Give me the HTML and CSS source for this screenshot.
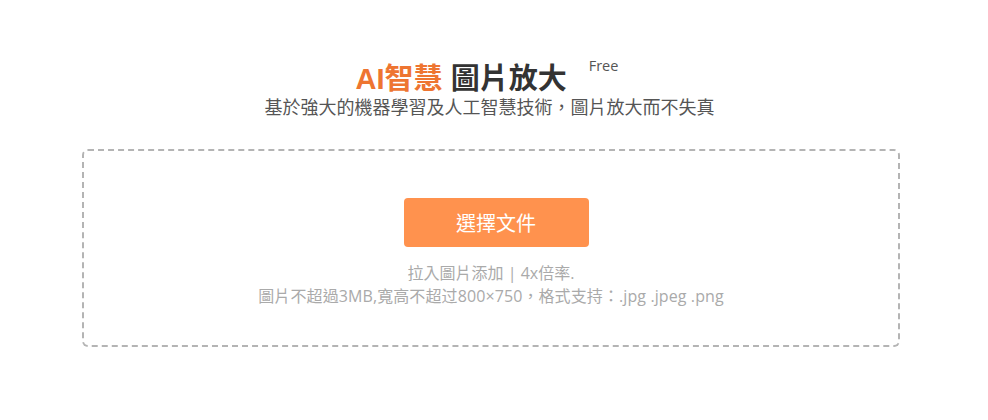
FILE: index.html
```html
<!DOCTYPE html>
<html lang="zh-Hant">
<head>
<meta charset="utf-8">
<title>AI智慧 圖片放大</title>
<link rel="stylesheet" href="styles.css">
</head>
<body>
<main class="page">
  <h1 class="title"><span class="accent">AI智慧</span> 圖片放大<span class="free">Free</span></h1>
  <p class="subtitle">基於強大的機器學習及人工智慧技術，圖片放大而不失真</p>
  <section class="dropzone">
    <button class="choose" type="button">選擇文件</button>
    <p class="hint">拉入圖片添加 | 4x倍率.</p>
    <p class="hint">圖片不超過3MB,寬高不超过800×750，格式支持：.jpg .jpeg .png</p>
  </section>
</main>
</body>
</html>
```
FILE: styles.css
```css
* { box-sizing: border-box; }
html, body { margin: 0; padding: 0; background: #fff; }
body {
  font-family: "Noto Sans CJK TC", "Noto Sans", sans-serif;
  color: #333;
}
.page {
  width: 988px;
  padding-top: 62px;
  display: flex;
  flex-direction: column;
  align-items: flex-start;
}
.title {
  align-self: stretch;
  margin: 0;
  padding-right: 14px;
  text-align: center;
  font-family: "Liberation Sans", "Noto Sans CJK TC", sans-serif;
  font-size: 29px;
  line-height: 34px;
  font-weight: 700;
  color: #333;
}
.accent { color: #ee7531; }
.free {
  font-family: "Open Sans", sans-serif;
  font-size: 14.5px;
  font-weight: 400;
  color: #555;
  margin-left: 22px;
  vertical-align: 18px;
  line-height: 0;
}
.subtitle {
  align-self: stretch;
  margin: 0;
  text-align: center;
  font-family: "Liberation Sans", "Noto Sans CJK TC", sans-serif;
  font-size: 18px;
  line-height: 24px;
  color: #555;
  padding-right: 9px;
}
.dropzone {
  margin: 29px 0 0 82px;
  width: 818px;
  height: 198px;
  border: 2px dashed #b4b4b4;
  border-radius: 6px;
  display: flex;
  flex-direction: column;
  align-items: center;
  padding-top: 47px;
}
.choose {
  width: 185px;
  height: 49px;
  margin: 0 0 0 10px;
  border: none;
  border-radius: 4px;
  background: #ff924e;
  color: #fff;
  font-family: inherit;
  font-size: 20px;
  cursor: pointer;
}
.hint {
  margin: 0;
  font-family: "Open Sans", "Noto Sans CJK TC", sans-serif;
  font-size: 16px;
  line-height: 23px;
  color: #aaa;
}
.choose + .hint { margin-top: 15px; }
.hint + .hint { letter-spacing: 0.1px; }
```
